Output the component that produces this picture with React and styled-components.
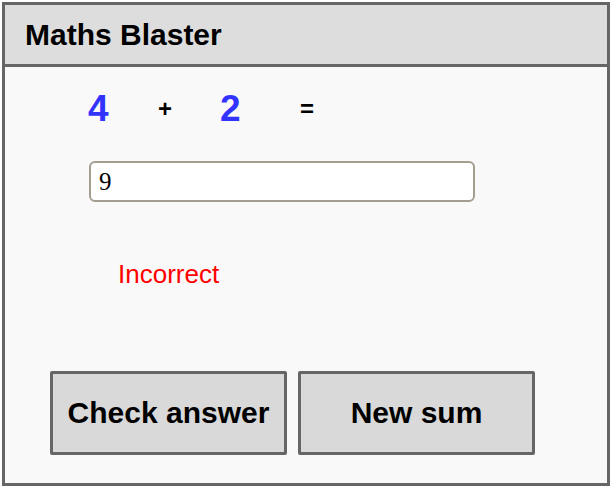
import React, { useState } from 'react';
import styled, { createGlobalStyle } from 'styled-components';

const GlobalStyle = createGlobalStyle`
  body {
    margin: 0;
    background: #ffffff;
    font-family: "Liberation Sans", Arial, sans-serif;
  }
`;

const Frame = styled.div`
  box-sizing: border-box;
  margin: 2px;
  width: 608px;
  height: 484px;
  border: 3px solid #666666;
  background: #f9f9f9;
  display: flex;
  flex-direction: column;
`;

const Header = styled.header`
  height: 59px;
  background: #dddddd;
  border-bottom: 3px solid #666666;
  display: flex;
  align-items: center;
  padding-left: 20px;
`;

const Title = styled.h1`
  margin: 0;
  font-size: 30px;
  font-weight: bold;
  color: #000000;
`;

const Equation = styled.div`
  display: grid;
  grid-template-columns: 70px 62px 80px auto;
  align-items: center;
  margin: 21px 0 0 83px;
`;

const Term = styled.span`
  font-size: ${({ $op }) => ($op ? '24px' : '37px')};
  font-weight: bold;
  color: ${({ $op }) => ($op ? '#000000' : '#3333ff')};
`;

const Answer = styled.input`
  box-sizing: border-box;
  margin: 31px 0 0 84px;
  width: 386px;
  height: 41px;
  border: 2px solid #a59d90;
  border-radius: 6px;
  background: #ffffff;
  padding: 0 8px;
  font-family: "Liberation Serif", "Times New Roman", serif;
  font-size: 25px;
  color: #000000;
  outline: none;
`;

const Feedback = styled.p`
  margin: 57px 0 0 113px;
  font-size: 26px;
  color: ${({ $ok }) => ($ok ? '#00a000' : '#ff0000')};
`;

const Buttons = styled.div`
  display: flex;
  gap: 11px;
  margin: 81px 0 0 45px;
`;

const Button = styled.button`
  box-sizing: border-box;
  width: 237px;
  height: 84px;
  border: 3px solid #666666;
  border-radius: 2px;
  background: #d9d9d9;
  font-family: "Liberation Sans", Arial, sans-serif;
  font-size: 30px;
  font-weight: bold;
  color: #000000;
  padding: 0;
  cursor: pointer;
`;

export default function App() {
  const [a] = useState(4);
  const [b] = useState(2);
  const [answer, setAnswer] = useState('9');

  return (
    <>
      <GlobalStyle />
      <Frame>
        <Header>
          <Title>Maths Blaster</Title>
        </Header>
        <Equation>
          <Term>{a}</Term>
          <Term $op>+</Term>
          <Term>{b}</Term>
          <Term $op>=</Term>
        </Equation>
        <Answer value={answer} onChange={(e) => setAnswer(e.target.value)} />
        <Feedback>Incorrect</Feedback>
        <Buttons>
          <Button>Check answer</Button>
          <Button>New sum</Button>
        </Buttons>
      </Frame>
    </>
  );
}
